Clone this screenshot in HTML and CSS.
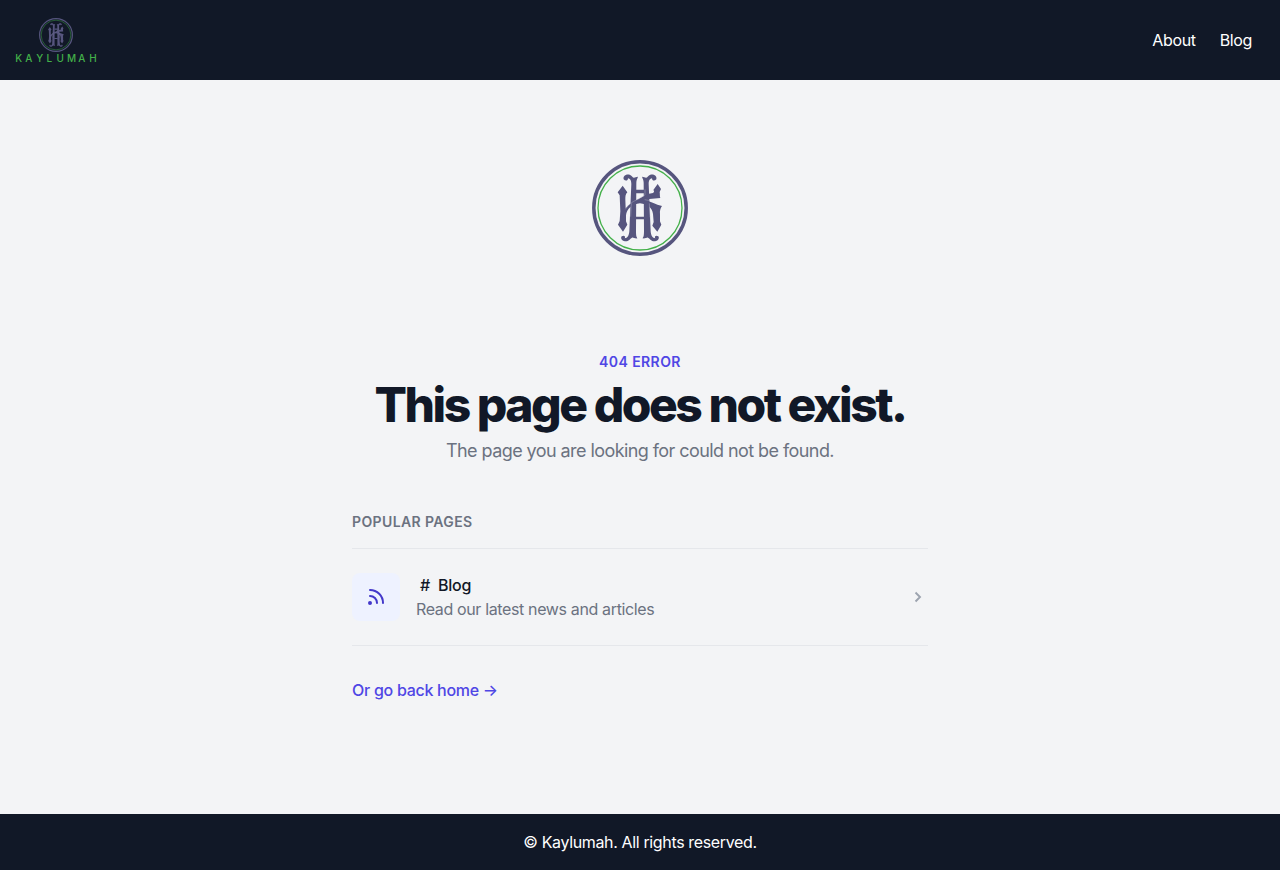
FILE: index.html
```html
<!DOCTYPE html>
<html lang="en">
<head>
<meta charset="utf-8">
<title>Page not found - Kaylumah</title>
<link rel="stylesheet" href="styles.css">
</head>
<body>
<svg class="symbols" aria-hidden="true">
  <symbol id="emblem" viewBox="0 0 96 96">
    <circle cx="48" cy="48" r="46.2" fill="none" stroke="#56557e" stroke-width="3.5"/>
    <circle cx="48" cy="48" r="42" fill="none" stroke="#43b049" stroke-width="1.3"/>
    <g transform="translate(18 8) scale(.33333)" fill="#56557e">
      <path d="M41 34C38 23 49 18 59 20C65 22 68 29 72 29C76 29 78 26 84 26C82 33 79 36 79 44L78 188C78 203 79 207 83 211C75 213 70 208 66 209C59 213 56 221 45 220C35 219 31 211 35 205C42 200 48 206 44 211C53 211 57 202 58 190L64 48C64 36 60 32 54 31C54 39 46 40 41 34Z"/>
      <path d="M139 34C142 23 131 18 121 20C115 22 112 29 108 29C104 29 102 26 96 26C98 33 101 36 101 44L102 188C102 203 101 207 97 211C105 213 110 208 114 209C121 213 124 221 135 220C145 219 149 211 145 205C138 200 132 206 136 211C127 211 123 202 122 190L116 48C116 36 120 32 126 31C126 39 134 40 139 34Z"/>
      <path d="M77 65H103V76H77ZM75 146H105V154H75Z"/>
      <path d="M38 53L52 73C46 79 46 85 46 95L47 121C57 107 72 99 87 92L113 78L129 75C133 73 133 68 130 66L143 48L153 63L149 72C150 78 149 85 151 90L118 93L106 97C123 100 137 111 156 114C151 121 149 128 150 139V160L154 170L142 191L127 173L131 162L129 138C127 120 112 108 90 106C67 108 50 123 48 142V160L52 170L39 191L24 170L29 159L31 130L29 82L23 73Z"/>
      <path d="M46 124C60 104 72 99 84 94L105 81V64M104 95L119 98M64 106L62 146M118 106L120 148" fill="none" stroke="#b6b7ca" stroke-width="1.2"/>
    </g>
  </symbol>
</svg>
<header class="site-header">
  <a class="brand" href="#" aria-label="Kaylumah">
    <svg class="brand-logo" viewBox="0 0 82 48">
      <use href="#emblem" x="23" y="2" width="34" height="34"/>
      <text class="wordmark" y="45.8" x="-.7 9.2 20.2 30.5 40.6 51 62.2 73.3">KAYLUMAH</text>
    </svg>
  </a>
  <nav class="nav"><a href="#">About</a><a href="#">Blog</a></nav>
</header>
<main class="content">
  <svg class="hero-logo"><use href="#emblem"/></svg>
  <div class="message">
    <p class="eyebrow">404 error</p>
    <h1 class="title">This page does not exist.</h1>
    <p class="lead">The page you are looking for could not be found.</p>
  </div>
  <section class="popular">
    <h2 class="popular-title">Popular pages</h2>
    <a class="page-row" href="#">
      <span class="page-icon">
        <svg width="24" height="24" viewBox="0 0 24 24" fill="none" stroke="currentColor" stroke-width="2" stroke-linecap="round" stroke-linejoin="round"><path d="M6 5c7.18 0 13 5.82 13 13M6 11a7 7 0 017 7m-6 0a1 1 0 11-2 0 1 1 0 012 0z"/></svg>
      </span>
      <span class="page-text"><span class="page-name"><span class="hash">#</span>Blog</span><span class="page-description">Read our latest news and articles</span></span>
      <svg class="chevron" width="20" height="20" viewBox="0 0 20 20" fill="none" stroke="currentColor" stroke-width="1.9" stroke-linecap="square"><path d="M8.2 6.2L12 10L8.2 13.8"/></svg>
    </a>
    <a class="home-link" href="#">Or go back home <span>→</span></a>
  </section>
</main>
<footer class="site-footer">© Kaylumah. All rights reserved.</footer>
</body>
</html>
```

FILE: styles.css
```css
* { box-sizing: border-box; }
body { margin: 0; min-height: 870px; display: flex; flex-direction: column; background: #f3f4f6; color: #111827; font: 415 16px/24px Inter, sans-serif; letter-spacing: -.36px; }
p, h1, h2 { margin: 0; }
a { color: inherit; text-decoration: none; }
.symbols { display: none; }
.site-header { height: 80px; padding: 16px 28px 16px 16px; display: flex; align-items: center; justify-content: space-between; background: #111827; color: #fff; }
.brand-logo { display: block; width: 82px; height: 48px; overflow: visible; }
.wordmark { font: 500 10px Inter, sans-serif; letter-spacing: 0; fill: #43b049; }
.nav { display: flex; gap: 24px; }
.content { flex: 1; width: 576px; margin: 0 auto; padding-top: 80px; display: flex; flex-direction: column; }
.hero-logo { width: 96px; height: 96px; align-self: center; }
.message { margin-top: 96px; text-align: center; }
.eyebrow { font-size: 14px; line-height: 20px; font-weight: 600; letter-spacing: .42px; text-transform: uppercase; color: #4f46e5; }
.title { margin-top: 9px; font-size: 48px; line-height: 48px; font-weight: 800; font-variation-settings: "opsz" 14; letter-spacing: -2.48px; white-space: nowrap; }
.lead { margin-top: 8px; font-size: 18px; line-height: 28px; letter-spacing: -.57px; color: #6b7280; }
.popular { margin-top: 47px; }
.popular-title { font-size: 14px; line-height: 20px; font-weight: 600; letter-spacing: .39px; text-transform: uppercase; color: #6b7280; }
.page-row { margin-top: 16px; padding: 24px 0; display: flex; align-items: center; gap: 16px; border: solid #e5e7eb; border-width: 1px 0; }
.page-icon { width: 48px; height: 48px; display: grid; place-items: center; border-radius: 8px; background: #eef2ff; color: #4338ca; }
.page-text { flex: 1; display: flex; flex-direction: column; }
.page-name { font-weight: 500; letter-spacing: -.25px; }
.hash { padding: 0 8px 0 4px; }
.page-description { color: #6b7280; }
.chevron { color: #9ca3af; }
.home-link { margin-top: 32px; display: inline-block; font-weight: 500; letter-spacing: -.28px; color: #4f46e5; }
.site-footer { height: 56px; display: grid; place-items: center; background: #111827; color: #fff; }
```
